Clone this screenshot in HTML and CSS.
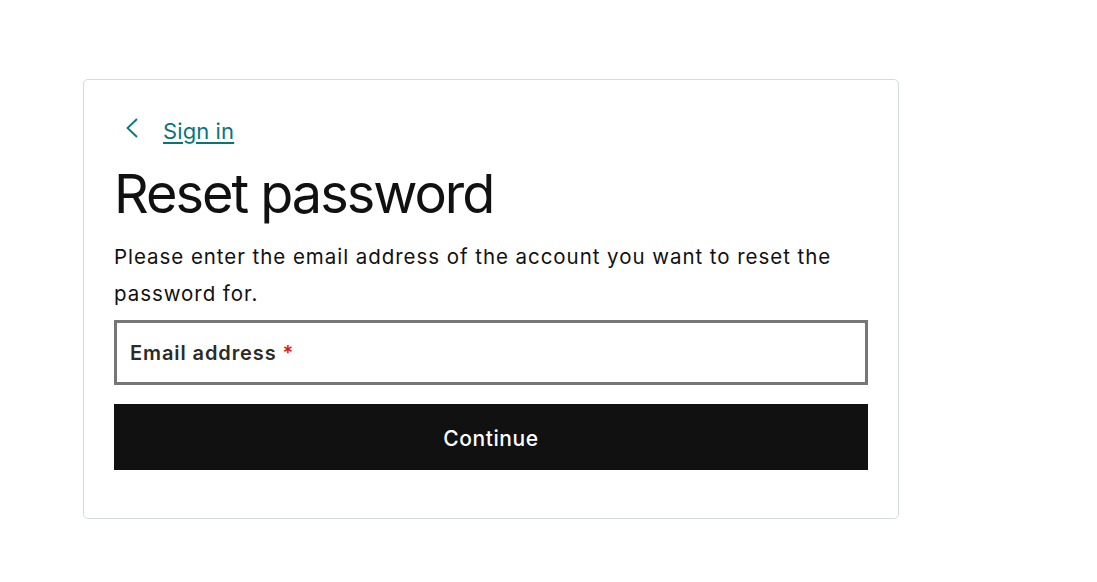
FILE: index.html
```html
<!DOCTYPE html>
<html lang="en">
<head>
<meta charset="utf-8">
<title>Reset password</title>
<link rel="stylesheet" href="styles.css">
</head>
<body>
<main class="page">
  <section class="card">
    <a class="back" href="#">
      <svg class="chev" width="14" height="20" viewBox="0 0 14 20" aria-hidden="true"><path d="M12 1 L2.5 10 L12 19" fill="none" stroke="currentColor" stroke-width="1.8"/></svg>
      <span class="back-text">Sign in</span>
    </a>
    <h1 class="title">Reset password</h1>
    <p class="intro">Please enter the email address of the account you want to reset the password for.</p>
    <label class="field">
      <span class="field-label">Email address <span class="req">*</span></span>
    </label>
    <button class="btn" type="button">Continue</button>
  </section>
</main>
</body>
</html>
```
FILE: styles.css
```css
* { box-sizing: border-box; }
html, body { margin: 0; background: #fff; }
body {
  font-family: Inter, "Noto Sans", "Liberation Sans", sans-serif;
  color: #111;
}
.page {
  padding: 79px 0 0 83px;
}
.card {
  width: 816px;
  height: 440px;
  border: 1px solid #d4dbe0;
  border-radius: 5px;
  padding: 30px 30px 48px 30px;
  display: flex;
  flex-direction: column;
}
.back {
  display: flex;
  align-items: center;
  gap: 24px;
  color: #09757a;
  text-decoration: none;
  padding: 7px 0 0 11px;
  height: 34px;
}
.chev { flex: none; margin-top: -5px; }
.back-text {
  font-size: 22px;
  letter-spacing: 0.1px;
  text-decoration: underline;
  text-decoration-thickness: 1.5px;
  text-underline-offset: 3px;
}
.title {
  margin: 18px 0 0 0;
  font-size: 54px;
  font-weight: 400;
  line-height: 64px;
  letter-spacing: -2px;
}
.intro {
  margin: 12px 0 0 0;
  font-size: 20.5px;
  line-height: 37px;
  letter-spacing: 0.95px;
}
.field {
  display: flex;
  align-items: center;
  margin-top: 8px;
  height: 65px;
  border: 3px solid #767676;
  padding: 0 13px;
}
.field-label {
  font-size: 20px;
  font-weight: 600;
  color: #2b2b2b;
  letter-spacing: 0.9px;
}
.req { color: #d81b0f; }
.btn {
  margin-top: 19px;
  height: 66px;
  width: 100%;
  border: 0;
  background: #111;
  color: #fff;
  font-family: inherit;
  font-size: 21px;
  font-weight: 500;
  letter-spacing: 0.6px;
  padding-top: 4px;
}
```
